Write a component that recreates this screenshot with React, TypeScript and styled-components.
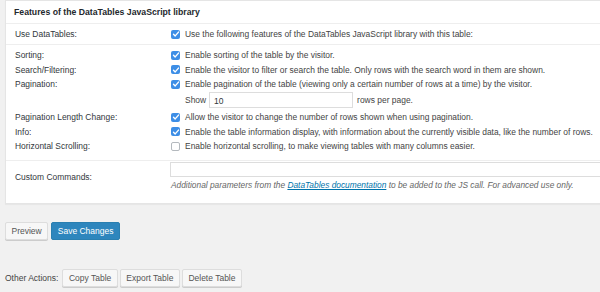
import React from "react";
import styled, { createGlobalStyle } from "styled-components";

const GlobalStyle = createGlobalStyle`
  html, body {
    margin: 0;
    padding: 0;
    background: #f1f1f1;
    font-family: "Liberation Sans", Arial, sans-serif;
    color: #444;
    overflow: hidden;
  }
`;

type Feature = { label: string; text: string; checked: boolean };

const features: Feature[] = [
  { label: "Sorting:", text: "Enable sorting of the table by the visitor.", checked: true },
  {
    label: "Search/Filtering:",
    text: "Enable the visitor to filter or search the table. Only rows with the search word in them are shown.",
    checked: true,
  },
  {
    label: "Pagination:",
    text: "Enable pagination of the table (viewing only a certain number of rows at a time) by the visitor.",
    checked: true,
  },
];

const features2: Feature[] = [
  {
    label: "Pagination Length Change:",
    text: "Allow the visitor to change the number of rows shown when using pagination.",
    checked: true,
  },
  {
    label: "Info:",
    text: "Enable the table information display, with information about the currently visible data, like the number of rows.",
    checked: true,
  },
  {
    label: "Horizontal Scrolling:",
    text: "Enable horizontal scrolling, to make viewing tables with many columns easier.",
    checked: false,
  },
];

const Check = ({ checked }: { checked: boolean }) => (
  <Box $checked={checked}>
    {checked && (
      <svg width="8" height="8" viewBox="0 0 8 8">
        <path d="M1.5 4.2 L3.2 5.9 L6.5 2.1" fill="none" stroke="#fff" strokeWidth="1.4" strokeLinecap="round" strokeLinejoin="round" />
      </svg>
    )}
  </Box>
);

const FeatureRow = ({ f }: { f: Feature }) => (
  <Row>
    <Label>{f.label}</Label>
    <Field>
      <Check checked={f.checked} />
      <span>{f.text}</span>
    </Field>
  </Row>
);

const App = () => (
  <Page>
    <GlobalStyle />
    <Panel>
      <Header>Features of the DataTables JavaScript library</Header>
      <Section $pad="0">
        <Row $h={20}>
          <Label>Use DataTables:</Label>
          <Field>
            <Check checked />
            <span>Use the following features of the DataTables JavaScript library with this table:</span>
          </Field>
        </Row>
      </Section>
      <Section $pad="3px 0 6px">
        {features.map((f) => (
          <FeatureRow key={f.label} f={f} />
        ))}
        <Row $h={17}>
          <Label />
          <Field $indent>
            Show <NumInput>10</NumInput> rows per page.
          </Field>
        </Row>
        <Spacer />
        {features2.map((f) => (
          <FeatureRow key={f.label} f={f} />
        ))}
      </Section>
      <Section $pad="1px 0 11px" $last>
        <Row>
          <Label>Custom Commands:</Label>
          <Stack>
            <TextBox />
            <Hint>
              Additional parameters from the <a>DataTables documentation</a> to be added to the JS call. For advanced use
              only.
            </Hint>
          </Stack>
        </Row>
      </Section>
    </Panel>
    <Buttons>
      <Button>Preview</Button>
      <Button $primary>Save Changes</Button>
    </Buttons>
    <Other>
      <span>Other Actions:</span>
      <Button>Copy Table</Button>
      <Button>Export Table</Button>
      <Button>Delete Table</Button>
    </Other>
  </Page>
);

export default App;

const Page = styled.div`
  width: 600px;
  height: 292px;
  padding-left: 5px;
  box-sizing: border-box;
`;
const Panel = styled.div`
  width: 640px;
  background: #fff;
  border: 1px solid #e5e5e5;
  box-shadow: 0 1px 1px rgba(0, 0, 0, 0.04);
`;
const Header = styled.div`
  height: 22px;
  line-height: 22px;
  padding-left: 8px;
  font-size: 8.7px;
  font-weight: bold;
  color: #23282d;
  border-bottom: 1px solid #eee;
`;
const Section = styled.div<{ $pad: string; $last?: boolean }>`
  padding: ${({ $pad }) => $pad};
  border-bottom: ${({ $last }) => ($last ? "none" : "1px solid #eee")};
`;
const Row = styled.div<{ $h?: number }>`
  display: grid;
  grid-template-columns: 165px 1fr;
  align-items: center;
  min-height: ${({ $h }) => ($h ? `${$h}px` : "14.5px")};
  font-size: 8.45px;
`;
const Spacer = styled.div`
  height: 1.5px;
`;
const Label = styled.div`
  padding-left: 9px;
  color: #32373c;
`;
const Field = styled.div<{ $indent?: boolean }>`
  display: flex;
  align-items: center;
  gap: 5px;
  color: #444;
  white-space: nowrap;
  padding-left: ${({ $indent }) => ($indent ? "14px" : "0")};
`;
const Box = styled.span<{ $checked: boolean }>`
  display: inline-flex;
  align-items: center;
  justify-content: center;
  width: 9px;
  height: 9px;
  border-radius: 2px;
  box-sizing: border-box;
  flex: none;
  background: ${({ $checked }) => ($checked ? "#3d8ee6" : "#fff")};
  border: ${({ $checked }) => ($checked ? "none" : "1px solid #b4b9be")};
`;
const NumInput = styled.span`
  display: inline-block;
  width: 144px;
  height: 16px;
  line-height: 16px;
  box-sizing: border-box;
  border: 1px solid #ddd;
  padding-left: 4px;
  margin: 0 -1px 0 -2px;
  color: #32373c;
  font-size: 8.5px;
`;
const Stack = styled.div`
  display: flex;
  flex-direction: column;
  gap: 3px;
  padding-bottom: 2px;
`;
const TextBox = styled.div`
  height: 15px;
  border: 1px solid #ddd;
  box-sizing: border-box;
  margin-left: -1px;
`;
const Hint = styled.div`
  font-style: italic;
  font-size: 8.35px;
  color: #666;
  white-space: nowrap;
  a {
    color: #0073aa;
    text-decoration: underline;
  }
`;
const Buttons = styled.div`
  display: flex;
  gap: 3px;
  margin-top: 18px;
`;
const Button = styled.button<{ $primary?: boolean }>`
  height: 18px;
  padding: 0 5.5px;
  font-family: inherit;
  font-size: 8.5px;
  border-radius: 2px;
  border: 1px solid ${({ $primary }) => ($primary ? "#2a7fb0" : "#ddd")};
  background: ${({ $primary }) => ($primary ? "#2e86bd" : "#f7f7f7")};
  color: ${({ $primary }) => ($primary ? "#fff" : "#555")};
  box-shadow: ${({ $primary }) => ($primary ? "none" : "0 1px 0 #ccc")};
`;
const Other = styled.div`
  display: flex;
  align-items: center;
  gap: 2px;
  margin-top: 29px;
  font-size: 8.5px;
  color: #444;
  span {
    margin-right: 2px;
  }
`;
